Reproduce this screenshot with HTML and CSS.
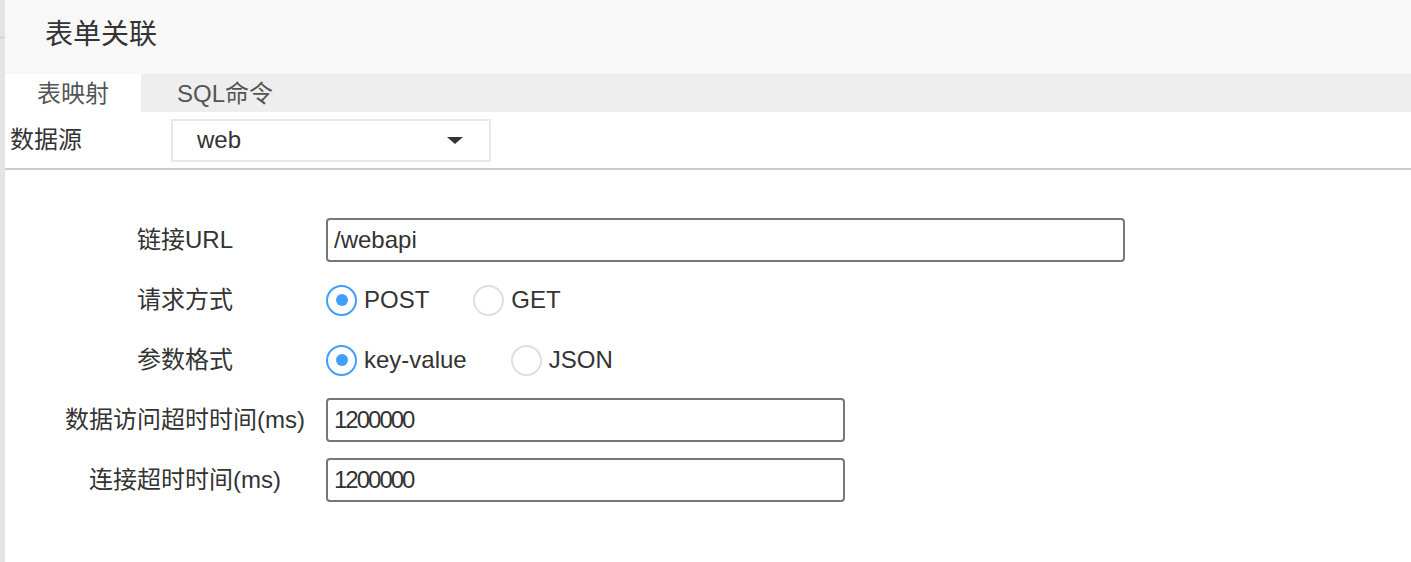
FILE: index.html
```html
<!DOCTYPE html>
<html lang="zh-CN">
  <head>
    <meta charset="UTF-8" />
    <meta name="viewport" content="width=device-width, initial-scale=1.0" />
    <title>表单关联</title>
    <link rel="stylesheet" href="styles.css">
  </head>
  <body>
    <div class="page">
      <div class="side">
        <div class="side-top"></div>
      </div>
      <div class="dialog">
        <div class="dialog-head">表单关联</div>
        <div class="tabs">
          <div class="tab active">表映射</div>
          <div class="tab">SQL命令</div>
        </div>
        <div class="source">
          <div class="source-label">数据源</div>
          <div class="select">
            <span>web</span>
            <i class="caret"></i>
          </div>
        </div>
        <div class="form">
          <div class="form-row">
            <label class="form-label">链接URL</label>
            <input class="text-input url" type="text" value="/webapi" />
          </div>
          <div class="form-row">
            <label class="form-label">请求方式</label>
            <div class="radio-group">
              <span class="radio checked"><i></i>POST</span>
              <span class="radio"><i></i>GET</span>
            </div>
          </div>
          <div class="form-row">
            <label class="form-label">参数格式</label>
            <div class="radio-group">
              <span class="radio checked"><i></i>key-value</span>
              <span class="radio"><i></i>JSON</span>
            </div>
          </div>
          <div class="form-row">
            <label class="form-label">数据访问超时时间(ms)</label>
            <input class="text-input num" type="text" value="1200000" />
          </div>
          <div class="form-row">
            <label class="form-label">连接超时时间(ms)</label>
            <input class="text-input num" type="text" value="1200000" />
          </div>
        </div>
      </div>
    </div>
  </body>
</html>
```

FILE: styles.css
```css
* {
  margin: 0;
  padding: 0;
  box-sizing: border-box;
}
body {
  font-family: "Liberation Sans", "Noto Sans CJK SC", sans-serif;
  color: #333;
  background: #fff;
}
.page {
  display: flex;
  height: 562px;
  overflow: hidden;
}
.side {
  width: 5px;
  background-color: #e4e4e4;
}
.side-top {
  height: 38px;
  border-bottom: 1px solid #cfcfcf;
}
.dialog {
  flex: 1;
  background-color: #fff;
}
.dialog-head {
  height: 74px;
  line-height: 70px;
  padding-left: 40px;
  font-size: 28px;
  color: #333;
  background-color: #f8f8f8;
}

.tabs {
  display: flex;
  gap: 4px;
  height: 38px;
  background-color: #eee;
}
.tab {
  padding: 0 32px;
  line-height: 40px;
  font-size: 24px;
  color: #555;
}
.tab.active {
  background-color: #fff;
}

.source {
  display: flex;
  align-items: center;
  height: 58px;
  padding-left: 5px;
  border-bottom: 2px solid #ccc;
}
.source-label {
  width: 161px;
  font-size: 24px;
  line-height: 1.1;
  color: #333;
}
.select {
  width: 320px;
  height: 43px;
  display: flex;
  align-items: center;
  justify-content: space-between;
  padding: 0 26px 0 24px;
  border: 2px solid #e8e8e8;
  font-size: 24px;
  color: #333;
}
.caret {
  width: 0;
  height: 0;
  border-left: 8px solid transparent;
  border-right: 8px solid transparent;
  border-top: 7px solid #333;
}

.form {
  display: flex;
  flex-direction: column;
  gap: 16px;
  padding: 48px 0 0 45px;
}
.form-row {
  display: flex;
  align-items: center;
  height: 44px;
}
.form-label {
  width: 270px;
  margin-right: 6px;
  text-align: center;
  font-size: 24px;
  line-height: 1.1;
  color: #333;
}
.text-input {
  height: 44px;
  padding: 0 6px;
  border: 2px solid #777;
  border-radius: 4px;
  font-family: inherit;
  color: #333;
  outline: none;
}
.url {
  width: 799px;
  font-size: 24px;
}
.num {
  width: 519px;
  font-size: 24px;
  letter-spacing: -2px;
}

.radio-group {
  display: flex;
  align-items: center;
}
.radio {
  display: flex;
  align-items: center;
  margin-right: 44px;
  font-size: 24px;
  color: #333;
}
.radio i {
  width: 31px;
  height: 31px;
  margin-right: 7px;
  border: 2px solid #dcdfe6;
  border-radius: 50%;
  display: flex;
  align-items: center;
  justify-content: center;
}
.radio.checked i {
  border-color: #409eff;
}
.radio.checked i::after {
  content: "";
  width: 12px;
  height: 12px;
  border-radius: 50%;
  background-color: #409eff;
}
```
